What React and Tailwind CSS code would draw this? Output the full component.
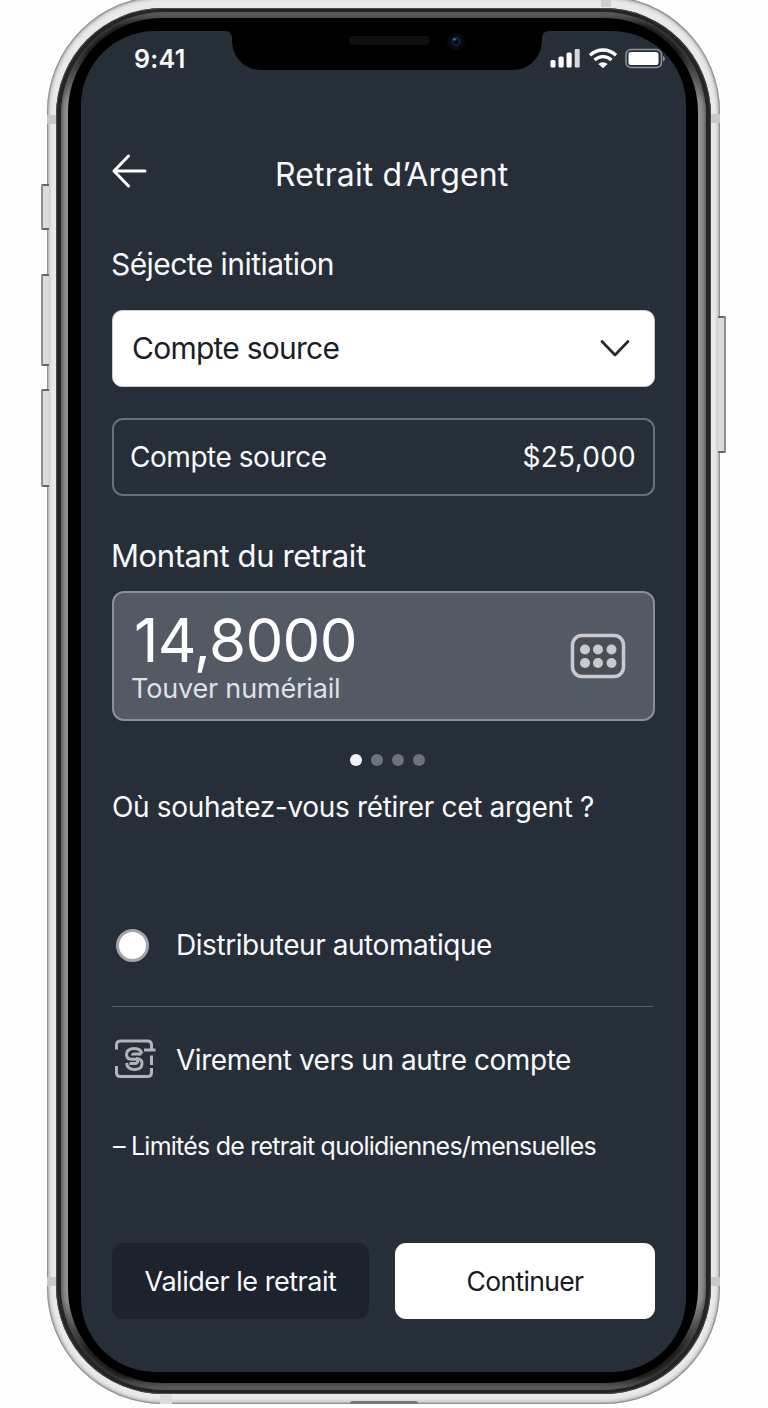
const INK = "whitespace-nowrap";

function SideKeys() {
  return (
    <>
      <div className="absolute left-[41px] top-[184px] h-[46px] w-[8px] rounded-l-[2px] border-y-2 border-l-2 border-y-[#666] border-l-[#8f8f8f] bg-[#dcdcdc]" />
      <div className="absolute left-[41px] top-[274px] h-[92px] w-[8px] rounded-l-[2px] border-y-2 border-l-2 border-y-[#666] border-l-[#8f8f8f] bg-[#dcdcdc]" />
      <div className="absolute left-[41px] top-[389px] h-[98px] w-[8px] rounded-l-[2px] border-y-2 border-l-2 border-y-[#666] border-l-[#8f8f8f] bg-[#dcdcdc]" />
      <div className="absolute left-[718px] top-[316px] h-[137px] w-[8px] rounded-r-[2px] border-y-2 border-r-2 border-y-[#666] border-r-[#8f8f8f] bg-[#dcdcdc]" />
    </>
  );
}

function AntennaBands() {
  return (
    <>
      <div className="absolute left-[47px] top-[115px] h-[9px] w-[9px] bg-[#c9c9c9]" />
      <div className="absolute left-[711px] top-[114px] h-[9px] w-[9px] bg-[#c9c9c9]" />
      <div className="absolute left-[47px] top-[1277px] h-[9px] w-[9px] bg-[#c9c9c9]" />
      <div className="absolute left-[711px] top-[1277px] h-[9px] w-[9px] bg-[#c9c9c9]" />
      <div className="absolute left-[601px] top-0 h-[7px] w-[10px] bg-[#cfcfcf]" />
      <div className="absolute left-[160px] top-[1395px] h-[9px] w-[12px] bg-[#dcdcdc]" />
      <div className="absolute left-[350px] top-[1401px] h-[3px] w-[68px] rounded-t-[3px] bg-[#777]" />
    </>
  );
}

function Notch() {
  return (
    <div className="absolute left-[143px] top-[-1px] h-[40px] w-[326px]">
      <svg className="block h-[40px] w-[326px]" viewBox="0 0 326 40">
        <path d="M0 0 V1 H1 Q8 1 8 9 C8 27 20 40 38 40 H288 C306 40 318 27 318 9 Q318 1 325 1 H326 V0 Z" fill="#000" />
        <rect x="125" y="6" width="81" height="9" rx="4.5" fill="#0e0f10" />
        <circle cx="232" cy="11.5" r="9" fill="#08090b" />
        <circle cx="232" cy="11.5" r="5" fill="#0d2138" />
        <circle cx="232" cy="12" r="2.5" fill="#04080f" />
        <circle cx="230.5" cy="9.5" r="1.2" fill="#4a7fae" />
      </svg>
    </div>
  );
}

function StatusBar() {
  return (
    <div className="flex h-[56px] items-center justify-between pl-[53px] pr-[20px]">
      <span className={`${INK} mt-[1px] text-[25px] font-semibold tracking-[0.3px]`}>9:41</span>
      <svg className="h-[24px] w-[116px]" viewBox="0 0 116 24">
        <g fill="#fff">
          <rect x="0.5" y="13" width="5" height="7.5" rx="1.5" />
          <rect x="8.5" y="9.500" width="5.200" height="11" rx="1.5" />
          <rect x="16.500" y="5.500" width="5.200" height="15" rx="1.5" />
          <rect x="24.700" y="2" width="5" height="18.500" rx="1" fill="#d6d7da" />
          <path d="M53 21.300 L48.300 17 A7 7 0 0 1 57.700 17 Z" />
        </g>
        <g fill="none" stroke="#fff" strokeWidth="3.400">
          <path d="M40 8.200 A19 19 0 0 1 66 8.200" />
          <path d="M44.500 13 A12.500 12.500 0 0 1 61.500 13" />
        </g>
        <rect x="76" y="2.5" width="35.500" height="18" rx="5" fill="none" stroke="#8d949c" strokeWidth="1.5" />
        <rect x="78.500" y="5" width="30" height="13" rx="2.5" fill="#fff" />
        <path d="M113.500 9.500 Q115.500 11.700 113.500 14 Z" fill="#8d949c" stroke="#8d949c" />
      </svg>
    </div>
  );
}

function KeypadIcon() {
  return (
    <svg className="h-[46px] w-[56px]" viewBox="0 0 56 46" fill="#c8cace">
      <rect x="2.500" y="2.500" width="51" height="41" rx="9.500" fill="#4b4e56" stroke="#c8cace" strokeWidth="3.500" />
      <circle cx="15" cy="16.500" r="5" />
      <circle cx="28" cy="16.500" r="5" />
      <circle cx="41.500" cy="16.500" r="5" />
      <circle cx="15" cy="30" r="5" />
      <circle cx="28" cy="30" r="5" />
      <circle cx="41.500" cy="30" r="5" />
    </svg>
  );
}

function TransferIcon() {
  return (
    <svg className="h-[40px] w-[42px]" viewBox="0 0 42 40" fill="none" stroke="#b0b3b8" strokeWidth="3">
      <path d="M1.500 10.500 V6 Q1.500 2 5.500 2 H32.500 Q36.500 2 36.500 6 V11" />
      <path d="M29 11 H40.500" />
      <path d="M1.500 27 V33.500 Q1.500 37.500 5.500 37.500 H32.500 Q36.500 37.500 36.500 33.500 V29" />
      <path d="M36.500 16.500 V26" />
      <path d="M27 14.500 Q25.500 9.500 19.500 9.500 Q11.500 9.500 11.500 15.500 Q11.500 20.300 17 20.300 H21 Q22.500 20.300 22.500 22.300 Q22.500 24.500 20 24.500 H14.500" />
      <path d="M26.500 15 H19.500 Q17.500 15 17.500 16.500 M21 19.500 Q27 19.500 27 24.500 Q27 30.500 19.500 30.500 Q12.500 30.500 11.500 24" />
    </svg>
  );
}

function Option({ icon, children, spacing }) {
  return (
    <div className="flex h-[60px] items-center">
      <div className="flex w-[64px] shrink-0 items-center">{icon}</div>
      <span className={`${INK} text-[28px] ${spacing}`}>{children}</span>
    </div>
  );
}

function WithdrawalScreen() {
  return (
    <div className="relative flex h-[1341px] w-[605px] flex-col overflow-hidden rounded-[74px] bg-[#262e38] text-[#f8f9fb]">
      <Notch />
      <StatusBar />
      <main className="flex flex-col px-[31px]">
        <header className="mt-[47px] flex h-[80px] items-center">
          <svg className="mt-[-6px] h-[34px] w-[36px] shrink-0" viewBox="0 0 36 34" fill="none" stroke="#fff" strokeWidth="3" strokeLinecap="round" strokeLinejoin="round">
            <path d="M33 17 H2 M16.500 2 L2 17 L16.500 32" />
          </svg>
          <h1 className={`${INK} ml-[127px] mt-[1px] text-[32px] tracking-[0.13px]`}>Retrait d’Argent</h1>
        </header>

        <h2 className={`${INK} ml-[-1px] mt-[30px] h-[40px] text-[30px] leading-[40px] tracking-[-0.56px]`}>Séjecte initiation</h2>
        <button className="mt-[26px] flex h-[77px] items-center justify-between rounded-[10px] border border-[#c9ccd2] bg-white pl-[19px] pr-[24px] text-[#1b2028]">
          <span className={`${INK} text-[30px] tracking-[-0.75px]`}>Compte source</span>
          <svg className="h-[18px] w-[30px]" viewBox="0 0 30 18" fill="none" stroke="#23272f" strokeWidth="2.600" strokeLinecap="round" strokeLinejoin="round">
            <path d="M2 1.500 L15 15 L28 1.500" />
          </svg>
        </button>
        <div className="mt-[31px] flex h-[78px] items-center justify-between rounded-[11px] border-2 border-[#67707b] pl-[16px] pr-[17px]">
          <span className={`${INK} text-[28px] tracking-[-0.46px]`}>Compte source</span>
          <span className={`${INK} text-[28px] tracking-[0.25px]`}>$25,000</span>
        </div>

        <h2 className={`${INK} ml-[-1px] mt-[40px] h-[40px] text-[31px] leading-[40px] tracking-[-0.4px]`}>Montant du retrait</h2>
        <div className="mt-[15px] flex h-[130px] items-center justify-between rounded-[12px] border-2 border-[#87909a] bg-[#545a64] pl-[17px] pr-[27px]">
          <div className="flex flex-col pt-[5px]">
            <span className={`${INK} ml-[3px] h-[61px] text-[60px] leading-[61px] tracking-[-0.7px] text-white`}>14,8000</span>
            <span className={`${INK} h-[36px] text-[27px] leading-[36px] tracking-[-0.18px] text-[#dfe1e5]`}>Touver numériail</span>
          </div>
          <KeypadIcon />
        </div>

        <div className="mt-[33px] flex h-[12px] items-center justify-center gap-[9px] pl-[8px]">
          <i className="size-[12px] rounded-full bg-[#f1f2f4]" />
          <i className="size-[12px] rounded-full bg-[#6d737c]" />
          <i className="size-[12px] rounded-full bg-[#6d737c]" />
          <i className="size-[12px] rounded-full bg-[#6d737c]" />
        </div>

        <p className={`${INK} mt-[21px] h-[40px] text-[28px] leading-[40px] tracking-[-0.33px]`}>Où souhatez-vous rétirer cet argent ?</p>

        <div className="mt-[88px] flex flex-col">
          <Option spacing="tracking-[-0.45px]" icon={<span className="ml-[4px] size-[33px] rounded-full border-[3px] border-[#a2a4aa] bg-white" />}>
            Distributeur automatique
          </Option>
          <div className="mt-[31px] h-px w-[541px] bg-[#59616b]" />
          <div className="mt-[23px]">
            <Option spacing="tracking-[-0.45px]" icon={<span className="mb-[2px] ml-[3px]"><TransferIcon /></span>}>
              Virement vers un autre compte
            </Option>
          </div>
        </div>

        <p className={`${INK} ml-[1px] mt-[36px] h-[40px] text-[25px] leading-[40px] tracking-[-0.77px]`}>– Limités de retrait quolidiennes/mensuelles</p>

        <div className="mt-[77px] flex h-[76px] gap-[26px]">
          <button className={`${INK} w-[257px] rounded-[11px] bg-[#1c232c] pt-[2px] text-[27px] tracking-[-0.48px]`}>Valider le retrait</button>
          <button className={`${INK} w-[260px] rounded-[11px] bg-white pt-[2px] text-[26.5px] tracking-[-0.65px] text-[#171a20]`}>Continuer</button>
        </div>
      </main>
    </div>
  );
}

export default function App() {
  return (
    <div className="relative h-[1408px] w-[768px] overflow-hidden bg-[#fefefe] font-['Inter','Liberation_Sans',sans-serif]">
      <SideKeys />
      <div className="ml-[47px] mt-[-4px] h-[1408px] w-[673px] rounded-[116px] bg-[#e9e9e9] pl-[9px] pt-[12px] shadow-[inset_0_0_4px_1px_#858585,inset_0_0_1px_1px_#a0a0a0]">
        <div className="h-[1386px] w-[655px] rounded-[107px] bg-[#242424] pl-[5px] pt-[4px] shadow-[inset_0_0_0_1px_#4a4a4a]">
          <div className="h-[1378px] w-[645px] rounded-[103px] bg-[linear-gradient(to_bottom,#6a6a6a_0px,#1c1c1c_14px,#1c1c1c_40px,#8f8f8f_90px,#8f8f8f_1288px,#1c1c1c_1338px,#1c1c1c_1364px,#6a6a6a_1378px)] pl-[7px] pt-[6px] shadow-[inset_0_0_4px_1px_#4a4a4a]">
            <div className="h-[1365px] w-[630px] rounded-[94px] bg-black pl-[13px] pt-[13px]">
              <WithdrawalScreen />
            </div>
          </div>
        </div>
      </div>
      <AntennaBands />
    </div>
  );
}
